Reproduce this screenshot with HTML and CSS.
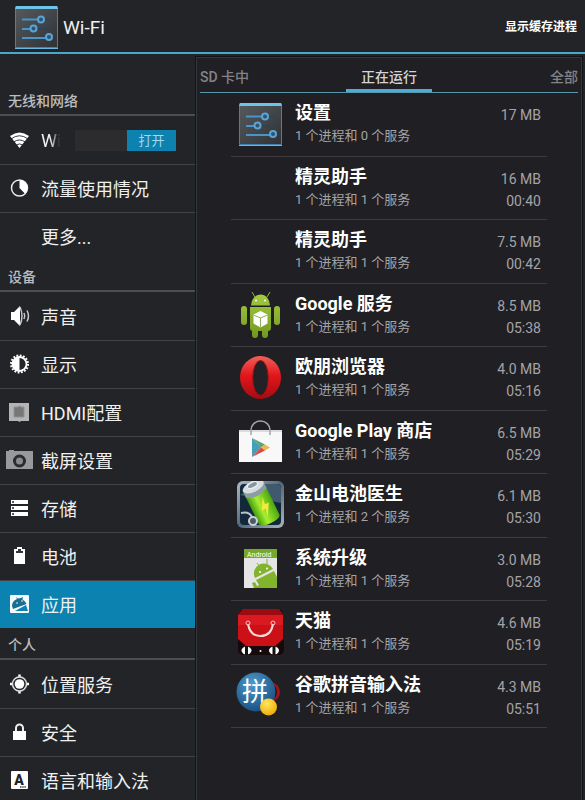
FILE: index.html
```html
<!DOCTYPE html>
<html lang="zh-CN">
<head>
<meta charset="utf-8">
<meta name="viewport" content="width=device-width, initial-scale=1">
<title>设置</title>
<link rel="stylesheet" href="styles.css">
</head>
<body>
<svg class="defs" aria-hidden="true">
  <defs>
    <linearGradient id="tile" x1="0" y1="0" x2="1" y2="1"><stop offset="0" stop-color="#55595c"/><stop offset="1" stop-color="#303236"/></linearGradient>
    <linearGradient id="robot" x1="0" y1="0" x2="0" y2="48" gradientUnits="userSpaceOnUse"><stop offset="0" stop-color="#a9cf45"/><stop offset="1" stop-color="#6f961f"/></linearGradient>
    <linearGradient id="red" x1="0" y1="0" x2="0" y2="1"><stop offset="0" stop-color="#f0605a"/><stop offset=".45" stop-color="#e3161b"/><stop offset="1" stop-color="#a40c12"/></linearGradient>
    <linearGradient id="cell" x1="0" y1="0" x2="1" y2="0"><stop offset="0" stop-color="#3f9a10"/><stop offset=".4" stop-color="#a8ee30"/><stop offset="1" stop-color="#4ba80f"/></linearGradient>
    <linearGradient id="steel" x1="0" y1="0" x2="1" y2="1"><stop offset="0" stop-color="#aebcc8"/><stop offset=".5" stop-color="#52687c"/><stop offset="1" stop-color="#a9b6c0"/></linearGradient>
    <radialGradient id="globe" cx=".4" cy=".3" r=".75"><stop offset="0" stop-color="#4f9bcb"/><stop offset="1" stop-color="#164c7e"/></radialGradient>
    <radialGradient id="ball" cx=".4" cy=".3" r=".7"><stop offset="0" stop-color="#ffe65a"/><stop offset="1" stop-color="#efae0c"/></radialGradient>
    <symbol id="settings" viewBox="0 0 48 48">
      <rect x="3" y="3" width="43" height="43" rx="2" fill="#3f83b5"/>
      <rect x="4" y="6" width="41" height="38" fill="url(#tile)"/>
      <path d="M4 3h41l1 3H3z" fill="#6dc4e8"/>
      <path d="M3 45.500h43" stroke="#69b5dc"/>
      <path d="M10 16.500h17M10 26h10M10 35h25" stroke="#4b94c6" stroke-width="2"/>
      <path d="M31 16.500h8M24 26h15" stroke="#2b4357"/>
      <g fill="#31536d" stroke="#5aa3d5" stroke-width="2"><circle cx="29" cy="16.500" r="3"/><circle cx="21.500" cy="25.500" r="3"/><circle cx="37" cy="34" r="3"/></g>
    </symbol>
  </defs>
</svg>

<header class="topbar">
  <svg class="app-icon" aria-hidden="true"><use href="#settings"/></svg>
  <h1>Wi-Fi</h1>
  <button type="button">显示缓存进程</button>
</header>

<div class="layout">
  <nav class="sidebar">
    <h2>无线和网络</h2>
    <ul>
      <li class="row">
        <svg class="glyph" viewBox="0 0 28 28"><path d="M13.500 22 4 10q9.500-7 19 0z" fill="#fff"/><path d="M5 13q8.500-6.500 17 0M7.500 16.200q6-4.500 12 0M10 19.200q3.500-2.600 7 0" fill="none" stroke="#222428" stroke-width=".9"/></svg>
        <label class="wifi-name" for="wifi">Wi-Fi</label>
        <span class="switch"><input type="checkbox" id="wifi" checked><span class="thumb">打开</span></span>
      </li>
      <li><a class="row" href="#data">
        <svg class="glyph" viewBox="0 0 28 28"><circle cx="13.500" cy="14" r="8" fill="none" stroke="#e8e8e8" stroke-width="1.500"/><path d="M13.500 14V6a8 8 0 0 1 5.500 13.800z" fill="#fff"/></svg>
        流量使用情况</a></li>
      <li><a class="row" href="#more"><span class="glyph"></span>更多...</a></li>
    </ul>
    <h2>设备</h2>
    <ul>
      <li><a class="row" href="#sound">
        <svg class="glyph" viewBox="0 0 28 28"><path d="M5 10h3l6-6v20l-6-6H5z" fill="#fff"/><path d="M14 5q4 9 0 18M18 11q1.500 3 0 6M21 8.500q3 5.500 0 11" fill="none" stroke="#c8c8c8" stroke-width="1.500"/></svg>
        声音</a></li>
      <li><a class="row" href="#display">
        <svg class="glyph" viewBox="0 0 28 28"><circle cx="13.500" cy="14" r="8.500" fill="none" stroke="#fff" stroke-width="2" stroke-dasharray="1.800 1.538"/><circle cx="13.500" cy="14" r="7" fill="#222428" stroke="#fff" stroke-width="1.800"/><path d="M13.500 7a7 7 0 0 0 0 14z" fill="#fff"/></svg>
        显示</a></li>
      <li><a class="row" href="#hdmi">
        <svg class="glyph" viewBox="0 0 28 28"><path d="M3 5h20v18h-8l-1.500 1L12 23H3z" fill="#b4b4b4"/><path d="M8 9h4l1.500-1L15 9h3v10H8z" fill="#777" stroke="#929292"/></svg>
        HDMI配置</a></li>
      <li><a class="row" href="#capture">
        <svg class="glyph" viewBox="0 0 28 28"><path d="M0 5h3V4h5v1h19v18H0z" fill="#98999b"/><circle cx="13.500" cy="15" r="5" fill="#898a8c" stroke="#292b2e" stroke-width="3"/></svg>
        截屏设置</a></li>
      <li><a class="row" href="#storage">
        <svg class="glyph" viewBox="0 0 28 28"><path d="M5 6h17v4H5zM5 12h17v4H5zM5 18h17v4H5z" fill="#fff"/><path d="M6 8h2M6 14h2M6 20h2" stroke="#222428" stroke-width="1.500"/></svg>
        存储</a></li>
      <li><a class="row" href="#battery">
        <svg class="glyph" viewBox="0 0 28 28"><path d="M8 7h3V5h5v2h3v15H8z" fill="#fff"/><path d="M10 11V9h2V7h3v2h2v2z" fill="#33363a"/></svg>
        电池</a></li>
      <li><a class="row current" href="#apps" aria-current="page">
        <svg class="glyph" viewBox="0 0 28 28"><rect x="4" y="5" width="19" height="18" rx="1" fill="#f3fbff"/><path d="M6 16q0-5 5-7l-1-2 2 1.500 3-.5 2-1-.5 2.500q3 1.500 4 4.500L7 19z" fill="#176f94"/><path d="M9 21l11-6 2 6z" fill="#0b82af"/><circle cx="11" cy="13" r=".8" fill="#fff"/><circle cx="16" cy="11" r=".8" fill="#fff"/></svg>
        应用</a></li>
    </ul>
    <h2>个人</h2>
    <ul>
      <li><a class="row" href="#location">
        <svg class="glyph" viewBox="0 0 28 28"><path d="M13.500 4.500v19M4 14h19" stroke="#fff" stroke-width="2.500"/><circle cx="13.500" cy="14" r="7" fill="#222428" stroke="#ddd" stroke-width="1.500"/><circle cx="13.500" cy="14" r="4.800" fill="#fff"/></svg>
        位置服务</a></li>
      <li><a class="row" href="#security">
        <svg class="glyph" viewBox="0 0 28 28"><rect x="7" y="13" width="13" height="9" fill="#fff"/><path d="M10 13v-3a3.500 3.500 0 0 1 7 0v3" fill="none" stroke="#eee" stroke-width="2"/></svg>
        安全</a></li>
      <li><a class="row" href="#language">
        <svg class="glyph" viewBox="0 0 28 28"><rect x="5" y="5" width="17" height="18" rx="1" fill="#fff"/><text x="13" y="19" class="key">A</text><path d="M14 21h6" stroke="#444" stroke-width="1.500" stroke-dasharray="1.500 .7"/></svg>
        语言和输入法</a></li>
    </ul>
  </nav>

  <main class="panel">
    <nav class="tabs">
      <a href="#sd">SD 卡中</a>
      <a class="active" href="#running" aria-current="page">正在运行</a>
      <a href="#all">全部</a>
    </nav>
    <ul class="apps">
      <li>
        <svg class="app-icon" aria-hidden="true"><use href="#settings"/></svg>
        <div class="info"><h3>设置</h3><p>1 个进程和 0 个服务</p></div>
        <div class="usage"><span>17 MB</span></div>
      </li>
      <li>
        <span class="app-icon"></span>
        <div class="info"><h3>精灵助手</h3><p>1 个进程和 1 个服务</p></div>
        <div class="usage"><span>16 MB</span><time>00:40</time></div>
      </li>
      <li>
        <span class="app-icon"></span>
        <div class="info"><h3>精灵助手</h3><p>1 个进程和 1 个服务</p></div>
        <div class="usage"><span>7.5 MB</span><time>00:42</time></div>
      </li>
      <li>
        <svg class="app-icon" viewBox="0 0 48 48"><path d="M19 6l-3-5M31 6l3-5" stroke="#90b43a"/><g fill="url(#robot)"><path d="M15 14.500a9.500 11 0 0 1 19 0z"/><path d="M14 16h21v21q0 3-3 3H17q-3 0-3-3z"/><rect x="5" y="15" width="6" height="19" rx="3"/><rect x="38" y="15" width="6" height="19" rx="3"/><path d="M16 38h6v6a3 3 0 0 1-6 0zM26 38h6v6a3 3 0 0 1-6 0z"/></g><circle cx="20" cy="9.500" r="1" fill="#fff"/><circle cx="29" cy="9.500" r="1" fill="#fff"/><path d="M24.500 20l7 3.500v9l-7 4-7-4v-9z" fill="#fff"/><path d="M17.500 24l7 3 7-3M24.500 27v9" fill="none" stroke="#91ad5b"/></svg>
        <div class="info"><h3>Google 服务</h3><p>1 个进程和 1 个服务</p></div>
        <div class="usage"><span>8.5 MB</span><time>05:38</time></div>
      </li>
      <li>
        <svg class="app-icon" viewBox="0 0 48 48"><ellipse cx="24.500" cy="23.500" rx="20.500" ry="21.500" fill="url(#red)"/><ellipse cx="24.500" cy="24" rx="7.800" ry="17.500" fill="#222125" stroke="#a01015"/></svg>
        <div class="info"><h3>欧朋浏览器</h3><p>1 个进程和 1 个服务</p></div>
        <div class="usage"><span>4.0 MB</span><time>05:16</time></div>
      </li>
      <li>
        <svg class="app-icon" viewBox="0 0 48 48"><path d="M3 12h43v32H3z" fill="#f8f8f8"/><path d="M3 12h43v2H3z" fill="#dcdcdc"/><path d="M15 17v-5a9.500 9 0 0 1 19 0v5" fill="none" stroke="#a2a4a6" stroke-width="1.500"/><path d="M16 20l9 9.500-9 9.500z" fill="#449fbe"/><path d="M16 20l13 6.500-4 3z" fill="#55a578"/><path d="M29 26.500l5 3-5 3-4-3z" fill="#eeb942"/><path d="M16 39l13-6.500-4-3z" fill="#d64b45"/></svg>
        <div class="info"><h3>Google Play 商店</h3><p>1 个进程和 1 个服务</p></div>
        <div class="usage"><span>6.5 MB</span><time>05:29</time></div>
      </li>
      <li>
        <svg class="app-icon" viewBox="0 0 48 48"><rect x="1" y="0" width="47" height="47" rx="6" fill="url(#steel)"/><rect x="4" y="3" width="41" height="41" rx="4" fill="#14283b"/><path d="M4 14L22 3h18q5 0 5 5v14z" fill="#41596e"/><g transform="translate(-3 -2) rotate(-26 28 25) scale(1.080)"><path d="M16 8v31q0 4 10.500 4T37 39V8z" fill="url(#cell)"/><path d="M16 5v7q10 6 21 0V5z" fill="#8d9ca4"/><ellipse cx="26.500" cy="5.500" rx="10.500" ry="5" fill="#d5dde1"/><ellipse cx="26.500" cy="4" rx="5" ry="2.500" fill="#8897a2" stroke="#edf2f5"/><path d="M30 18l-6 11h4l-2 8 7-12h-4z" fill="#f4e93c"/></g><path d="M5 32q8-2 11 4" fill="none" stroke="#b8c2ca" stroke-width="2"/><circle cx="17" cy="40" r="4" fill="#4d5a65" stroke="#cbd2d7" stroke-width="2"/></svg>
        <div class="info"><h3>金山电池医生</h3><p>1 个进程和 2 个服务</p></div>
        <div class="usage"><span>6.1 MB</span><time>05:30</time></div>
      </li>
      <li>
        <svg class="app-icon" viewBox="0 0 48 48"><path d="M8 4h33v39H8z" fill="#e5e5e5"/><path d="M8 4h33v9H8z" fill="#76a82b"/><text x="11" y="12" class="brand">Android</text><g fill="#82b32c"><path d="M19 33a10 10 0 0 1 18-9z"/><path d="M20 35l18-9 3 6v11H18l5-3z"/></g><path d="M24 22l-3-4M31 19v-5" stroke="#82b32c"/><circle cx="24" cy="27" r="1" fill="#fff"/><circle cx="31" cy="23.500" r="1" fill="#fff"/><path d="M16 38l3-1 3 6h-4z" fill="#82b32c"/></svg>
        <div class="info"><h3>系统升级</h3><p>1 个进程和 1 个服务</p></div>
        <div class="usage"><span>3.0 MB</span><time>05:28</time></div>
      </li>
      <li>
        <svg class="app-icon" viewBox="0 0 48 48"><path d="M8 1h34q3 0 4 3l2 9v28q0 6-6 6H8q-6 0-6-6V13l2-9q1-3 4-3z" fill="#17090b"/><path d="M7 1h36l4 6v24l-8 7H10l-8-7V7z" fill="#cb1018"/><path d="M7 1h36l4 6H2z" fill="#9d0b12"/><path d="M2 7h45v10H2z" fill="#d91a21"/><path d="M12 16q2 12 12.500 12T37 16" fill="none" stroke="#f7dcdc" stroke-width="2"/><g fill="none" stroke="#eac3c3"><circle cx="12" cy="15" r="2"/><circle cx="37" cy="15" r="2"/></g><g fill="#fff"><ellipse cx="10.500" cy="42.500" rx="5" ry="4"/><ellipse cx="38" cy="42.500" rx="5" ry="4"/><circle cx="24.500" cy="43" r="1"/></g><path d="M10.500 38v9M38 38v9" stroke="#111" stroke-width="3"/></svg>
        <div class="info"><h3>天猫</h3><p>1 个进程和 1 个服务</p></div>
        <div class="usage"><span>4.6 MB</span><time>05:19</time></div>
      </li>
      <li>
        <svg class="app-icon" viewBox="0 0 48 48"><circle cx="34" cy="20" r="10" fill="#a3141b"/><circle cx="31" cy="20" r="10" fill="#300b10"/><circle cx="20" cy="20" r="19.500" fill="url(#globe)"/><text x="6" y="29" class="pin">拼</text><circle cx="32.500" cy="35" r="8.500" fill="url(#ball)"/></svg>
        <div class="info"><h3>谷歌拼音输入法</h3><p>1 个进程和 1 个服务</p></div>
        <div class="usage"><span>4.3 MB</span><time>05:51</time></div>
      </li>
    </ul>
  </main>
</div>
</body>
</html>
```
FILE: styles.css
```css
* {
  box-sizing: border-box;
}

body {
  display: flex;
  flex-direction: column;
  min-height: 100vh;
  margin: 0;
  background: #222428;
  color: #f0f0f0;
  font-family: Roboto, "Noto Sans CJK SC", sans-serif;
}

h1, h2, h3, p, ul {
  margin: 0;
  padding: 0;
}

ul {
  list-style: none;
}

a {
  color: inherit;
  text-decoration: none;
}

.defs {
  position: absolute;
  width: 0;
  height: 0;
}

.app-icon {
  flex: none;
  width: 48px;
  height: 48px;
}

.topbar {
  display: flex;
  align-items: center;
  gap: 3px;
  height: 54px;
  padding: 2px 8px 0 12px;
  border-bottom: 2px solid #4ba6cb;
}

.topbar h1 {
  flex: 1;
  font-size: 19px;
  font-weight: 400;
}

.topbar button {
  padding: 0;
  border: 0;
  background: none;
  color: #fff;
  font: bold 12px/20px Roboto, "Noto Sans CJK SC", sans-serif;
}

.layout {
  display: grid;
  flex: 1;
  grid-template-columns: 196px 1fr;
}

/* The list scrolls past the bottom of the window */
.sidebar {
  height: calc(100vh - 54px);
  padding-top: 30px;
  overflow: hidden;
}

.sidebar h2 {
  height: 32px;
  padding-left: 8px;
  border-bottom: 2px solid #4b4e51;
  color: #bcbdbf;
  font-size: 14px;
  font-weight: 500;
  line-height: 34px;
}

.row {
  display: flex;
  align-items: center;
  gap: 7px;
  height: 48px;
  padding: 0 20px 0 6px;
  font-size: 18px;
  white-space: nowrap;
}

.sidebar li + li {
  border-top: 1px solid #414447;
}

.sidebar li + li .row {
  height: 47px;
  padding-bottom: 2px;
}

.row.current {
  background: #0b82af;
}

.glyph {
  flex: none;
  width: 28px;
  height: 28px;
}

.key {
  fill: #222;
  font-size: 14px;
  font-weight: 900;
  text-anchor: middle;
}

/* The name fades out where the switch leaves it no room */
.wifi-name {
  flex: 1;
  min-width: 0;
  overflow: hidden;
  margin-right: 8px;
  mask-image: linear-gradient(to right, #000 50%, transparent);
}

.switch {
  position: relative;
  display: flex;
  flex: none;
  justify-content: flex-end;
  width: 101px;
  height: 21px;
  background: #2c2c2e;
}

.switch input {
  position: absolute;
  inset: 0;
  width: 100%;
  height: 100%;
  margin: 0;
  opacity: 0;
}

.thumb {
  width: 49px;
  background: #0d82af;
  color: #a5d8ec;
  font-size: 13px;
  line-height: 21px;
  text-align: center;
}

.panel {
  margin: 3px 3px 0 0;
  padding: 4px 3px 0;
  border: 1px solid #35383a;
  border-bottom: 0;
  background: #201f23;
  outline: 1px solid #111315;
}

.tabs {
  display: grid;
  grid-template-columns: 1fr auto 1fr;
  border-bottom: 1px solid #5796ad;
  color: #838387;
  font-size: 14px;
  font-weight: 500;
  line-height: 30px;
}

.tabs a:last-child {
  text-align: right;
}

.tabs .active {
  height: 30px;
  padding: 0 15px;
  border-bottom: 3px solid #4caed6;
  color: #d4d4d6;
}

.apps {
  display: grid;
  grid-auto-rows: 1fr;
  min-height: 635px;
  margin: 0 31px;
}

.apps li {
  display: flex;
  align-items: center;
  gap: 11px;
  padding: 0 6px 0 5px;
  border-bottom: 1px solid #3d3d41;
}

.info {
  flex: 1;
}

.info h3 {
  color: #fff;
  font-size: 18px;
  font-weight: 700;
  line-height: 24px;
}

.info p {
  color: #a4a4a8;
  font-size: 13px;
  line-height: 22px;
}

.usage {
  align-self: flex-start;
  padding-top: 11px;
  color: #a4a4a8;
  font-size: 14px;
  line-height: 22px;
  text-align: right;
}

.usage span,
.usage time {
  display: block;
}

.brand {
  fill: #fff;
  font-size: 7px;
}

.pin {
  fill: #fff;
  font-size: 26px;
}
```
